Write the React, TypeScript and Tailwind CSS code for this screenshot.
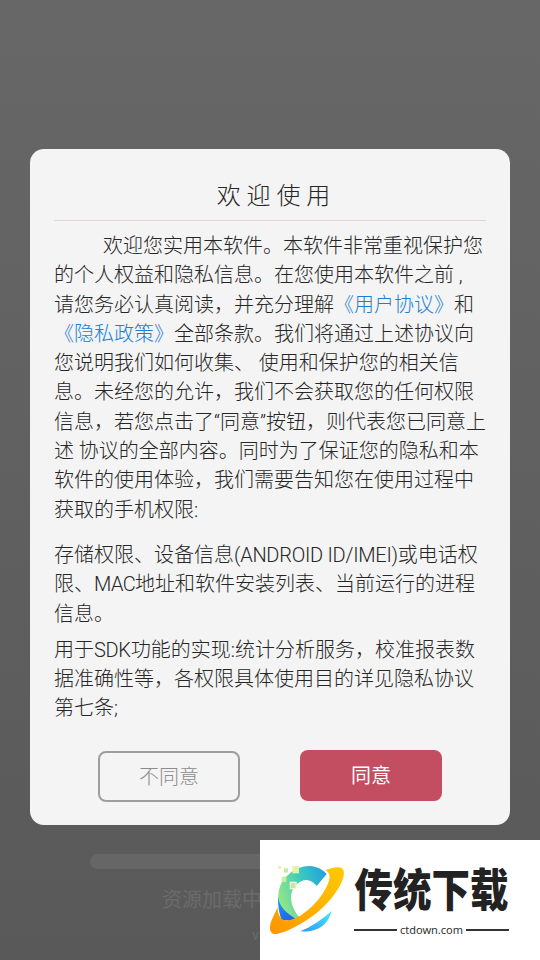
const FONT = "font-['Roboto','Noto_Sans_CJK_SC',sans-serif]";

function Logo() {
  return (
    <div className="absolute bottom-0 right-0 flex h-[120px] w-[280px] items-start bg-white pl-[5px]">
      <svg width="85" height="80" viewBox="0 0 255 240" className="mt-[20px] shrink-0">
        <defs>
          <linearGradient id="ring" x1="0" y1="1" x2="1" y2="0">
            <stop offset="0" stopColor="#ff9500" />
            <stop offset="1" stopColor="#ffcb00" />
          </linearGradient>
          <linearGradient id="arc" x1="0" y1="0.5" x2="1" y2="0.1">
            <stop offset="0" stopColor="#8ee58a" />
            <stop offset="0.5" stopColor="#3fc9bd" />
            <stop offset="1" stopColor="#1c9fe0" />
          </linearGradient>
          <linearGradient id="blue" x1="0.2" y1="0" x2="0.6" y2="1">
            <stop offset="0" stopColor="#18a5dc" />
            <stop offset="1" stopColor="#2460f0" />
          </linearGradient>
          <linearGradient id="cyan" x1="1" y1="0" x2="0" y2="1">
            <stop offset="0" stopColor="#4ce8ff" />
            <stop offset="1" stopColor="#2a98f5" />
          </linearGradient>
        </defs>
        <path d="M40 105 C42 130 60 155 100 172 L75 182 L50 180 C42 160 37 130 40 105 Z" fill="url(#blue)" />
        <path d="M40 112 C40 85 48 62 70 44 C90 25 115 17 135 18 C155 19 172 28 185 42 L155 78 C148 68 135 60 122 60 C100 62 80 85 78 108 C77 130 88 155 102 170 L92 176 C65 160 42 140 40 112 Z" fill="url(#arc)" />
        <path d="M182 31 C200 23 220 19 230 24 C240 30 238 48 230 66 C215 100 185 135 150 163 C115 190 70 215 35 222 C22 224 14 216 15 200 C17 182 30 160 38 142 C38 160 44 178 60 181 C80 184 110 168 135 145 C160 122 182 92 192 62 C196 48 193 38 182 31 Z" fill="url(#ring)" />
        <path d="M200 152 C195 170 188 185 172 198 C155 211 130 216 105 214 C140 200 172 178 200 152 Z" fill="url(#cyan)" />
        <rect x="40" y="18" width="8" height="8" fill="#e0f0a0" />
        <rect x="57" y="25" width="12" height="13" fill="#c5eaa0" />
        <rect x="82" y="18" width="20" height="22" fill="#e4f2a8" />
        <rect x="50" y="50" width="14" height="16" fill="#c8eca0" />
        <rect x="74" y="65" width="21" height="23" fill="#f0f8d8" />
        <rect x="78" y="69" width="13" height="15" fill="#c4eb9c" />
      </svg>
      <div className="ml-[4px] mt-[29px] flex w-[155px] flex-col items-center">
        <span className="origin-center scale-y-[1.17] whitespace-nowrap text-[38.5px] leading-[46px] font-black text-[#222222]">传统下载</span>
        <div className="mt-[9px] flex w-full items-center gap-[3px]">
          <div className="h-[2px] flex-1 bg-[#333333]" />
          <span className="font-['Noto_Sans'] text-[11px] leading-[12px] text-[#333333]">ctdown.com</span>
          <div className="h-[2px] flex-1 bg-[#333333]" />
        </div>
      </div>
    </div>
  );
}

const Link = ({ children }: { children: string }) => <span className="text-[#1a80d6]">{children}</span>;

function Line({ children }: { children: React.ReactNode }) {
  return <div className="whitespace-nowrap">{children}</div>;
}

export default function App() {
  return (
    <div className={`${FONT} relative h-[960px] w-[540px] overflow-hidden bg-gradient-to-b from-[#676767] to-[#595959]`}>
      {/* Loader behind the dialog */}
      <div className="absolute left-[90px] top-[854px] h-[15px] w-[360px] rounded-full bg-[#666666]" />
      <div className="absolute left-[162px] top-[885px] whitespace-nowrap text-[20px] leading-[30px] text-[#6b6b6b]">资源加载中，请稍候...</div>
      <div className="absolute left-[252px] top-[926px] text-[14px] leading-[18px] text-[#6b6b6b]">v1.0.0</div>

      {/* Dialog */}
      <div className="absolute left-[30px] top-[149px] flex h-[676px] w-[480px] flex-col rounded-[14px] bg-[#f4f4f4] px-[24px]">
        <div className="mt-[29px] pl-[7px] text-center text-[24px] leading-[36px] font-light text-[#262626]">欢 迎 使 用</div>
        <div className="mt-[6px] h-px bg-[#e6d5ca]" />
        <div className="mt-[11px] text-[20px] leading-[29.3px] font-light text-[#262626]">
          <Line><span className="ml-[49px]">欢迎您实用本软件。本软件非常重视保护您</span></Line>
          <Line>的个人权益和隐私信息。在您使用本软件之前 ,</Line>
          <Line>请您务必认真阅读，并充分理解<Link>《用户协议》</Link>和</Line>
          <Line><Link>《隐私政策》</Link>全部条款。我们将通过上述协议向</Line>
          <Line>您说明我们如何收集、 使用和保护您的相关信</Line>
          <Line>息。未经您的允许，我们不会获取您的任何权限</Line>
          <Line>信息，若您点击了“同意”按钮，则代表您已同意上</Line>
          <Line>述 协议的全部内容。同时为了保证您的隐私和本</Line>
          <Line>软件的使用体验，我们需要告知您在使用过程中</Line>
          <Line>获取的手机权限:</Line>
          <div className="mt-[16px]">
            <Line>存储权限、设备信息<span className="tracking-[-0.25px]">(ANDROID ID/IMEI)</span>或电话权</Line>
            <Line>限、<span className="tracking-[-0.6px]">MAC</span>地址和软件安装列表、当前运行的进程</Line>
            <Line>信息。</Line>
          </div>
          <div className="mt-[7px]">
            <Line>用于<span className="tracking-[-0.3px]">SDK</span>功能的实现:统计分析服务，校准报表数</Line>
            <Line>据准确性等，各权限具体使用目的详见隐私协议</Line>
            <Line>第七条;</Line>
          </div>
        </div>
        <div className="mt-[26px] flex items-start justify-between px-[44px]">
          <button className="mt-px flex h-[51px] w-[142px] items-center justify-center rounded-[8px] border-2 border-[#9e9e9e] pt-px text-[20px] font-light text-[#8c8c8c]">不同意</button>
          <button className="flex h-[51px] w-[142px] items-center justify-center rounded-[8px] bg-[#c34d61] pt-[2px] text-[20px] text-white">同意</button>
        </div>
      </div>

      <Logo />
    </div>
  );
}
